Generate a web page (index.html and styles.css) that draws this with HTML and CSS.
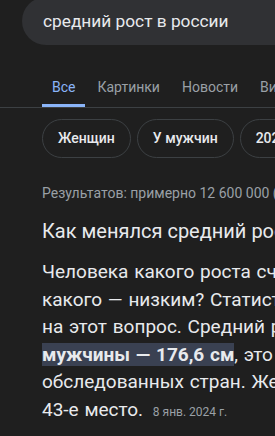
FILE: index.html
```html
<!DOCTYPE html>
<html>

	<head>
		<meta charset="UTF-8">
		<title>средний рост в россии</title>
		<link rel="stylesheet" href="styles.css">
	</head>

	<body>
		<div class="search">средний рост в россии</div>
		<nav class="tabs">
			<span class="tab active">Все</span>
			<span class="tab">Картинки</span>
			<span class="tab">Новости</span>
			<span class="tab">Видео</span>
		</nav>
		<div class="chips">
			<span class="chip">Женщин</span>
			<span class="chip">У мужчин</span>
			<span class="chip">2024</span>
		</div>
		<div class="stats">Результатов: примерно 12 600 000 (0,35 сек.)</div>
		<h2 class="title">Как менялся средний рост россиян</h2>
		<p class="snippet">
			Человека какого роста считают высоким, а<br>
			какого — низким? Статистика отвечает<br>
			на этот вопрос. Средний рост российского<br>
			<b class="hl">мужчины — 176,6 см</b>, это 46-е место среди<br>
			обследованных стран. Женщины — 165,3 см,<br>
			43-е место. <span class="date">8 янв. 2024 г.</span>
		</p>
	</body>

</html>
```

FILE: styles.css
```css
html,
body {
	margin: 0;
	width: 100%;
	height: 100%;
	overflow: hidden;
}

body {
	background: #1f1f1f;
	color: #e8eaed;
	font-family: Roboto, "Liberation Sans", sans-serif;
	white-space: nowrap;
}

.search {
	margin: -3px 0 0 22px;
	height: 48px;
	padding-left: 21px;
	line-height: 48px;
	font-size: 17.3px;
	background: #303134;
	border-radius: 24px 0 0 24px;
}

.tabs {
	display: flex;
	gap: 2px;
	padding-left: 42px;
	border-bottom: 1px solid #3c4043;
}

.tab {
	padding: 32px 10px 7px;
	line-height: 20px;
	font-size: 14px;
	color: #9aa0a6;
	border-bottom: 3px solid transparent;
}

.tab.active {
	color: #8ab4f8;
	border-bottom-color: #8ab4f8;
}

.chips {
	display: flex;
	gap: 6px;
	margin-top: 11px;
	padding-left: 42px;
}

.chip {
	height: 37px;
	padding: 0 15px;
	line-height: 37px;
	font-size: 14px;
	font-weight: 500;
	border: 1px solid #3c4043;
	border-radius: 20px;
}

.stats {
	margin-top: 25px;
	padding-left: 42px;
	line-height: 20px;
	font-size: 14px;
	color: #9aa0a6;
}

.title {
	margin: 14px 0 0;
	padding-left: 42px;
	line-height: 28px;
	font-size: 20px;
	font-weight: 400;
}

.snippet {
	margin: 13px 0 0;
	padding-left: 42px;
	line-height: 27.5px;
	font-size: 19px;
	word-spacing: 1px;
}

.hl {
	font-weight: 700;
	background: #3a4152;
}

.date {
	margin-left: 4px;
	font-size: 12px;
	color: #9aa0a6;
	word-spacing: 0;
}
```
